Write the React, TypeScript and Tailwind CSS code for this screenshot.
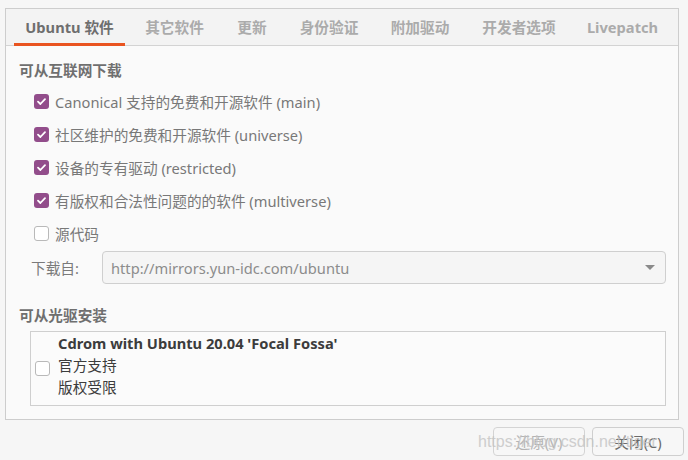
const tabs = [
  { label: "Ubuntu 软件", w: "w-[111px]", active: true },
  { label: "其它软件", w: "w-[85px]" },
  { label: "更新", w: "w-[56px]" },
  { label: "身份验证", w: "w-[84px]" },
  { label: "附加驱动", w: "w-[84px]" },
  { label: "开发者选项", w: "w-[100px]" },
  { label: "Livepatch", w: "w-[93px]" },
];

const sources = [
  { label: "Canonical 支持的免费和开源软件 (main)", checked: true },
  { label: "社区维护的免费和开源软件 (universe)", checked: true },
  { label: "设备的专有驱动 (restricted)", checked: true },
  { label: "有版权和合法性问题的的软件 (multiverse)", checked: true },
  { label: "源代码", checked: false },
];

function Check({ checked }: { checked: boolean }) {
  if (!checked) {
    return <span className="w-[15px] h-[15px] shrink-0 rounded-[3px] border border-[#b9b9b9] bg-white" />;
  }
  return (
    <span className="w-[15px] h-[15px] shrink-0 rounded-[3px] bg-[#924d8b] flex items-center justify-center">
      <svg width="11" height="11" viewBox="0 0 11 11">
        <path d="M2 5.6 L4.4 8 L9 3.2" fill="none" stroke="white" strokeWidth="1.8" strokeLinecap="round" strokeLinejoin="round" />
      </svg>
    </span>
  );
}

export default function App() {
  return (
    <div
      className="relative w-[688px] h-[460px] bg-[#f6f6f6] flex flex-col overflow-hidden text-[14.67px]"
      style={{ fontFamily: '"Noto Sans", "Noto Sans CJK SC", sans-serif' }}
    >
      <div className="mt-[8px] ml-[5px] w-[674px] h-[412px] border border-[#cdcdcd] bg-[#fafafa] flex flex-col">
        {/* tab bar */}
        <div className="h-[37px] bg-[#f3f3f3] border-b border-[#d3d3d3] flex pl-[8px] gap-[7px] shrink-0">
          {tabs.map((t) => (
            <div
              key={t.label}
              className={`${t.w} relative flex items-center justify-center font-bold ${t.active ? "text-[#6e6e6e]" : "text-[#ababab]"}`}
            >
              {t.label}
              {t.active && <span className="absolute left-0 right-0 bottom-[-1px] h-[3px] bg-[#e95420]" />}
            </div>
          ))}
        </div>

        <div className="flex flex-col pl-[13px] pr-[12px]">
          <div className="mt-[14px] h-[20px] leading-[20px] font-bold text-[#6f6f6f]">可从互联网下载</div>

          <div className="mt-[5px] flex flex-col ml-[15px]">
            {sources.map((s) => (
              <div key={s.label} className="h-[33px] flex items-center gap-[6px] text-[#787878]">
                <Check checked={s.checked} />
                <span>{s.label}</span>
              </div>
            ))}
          </div>

          <div className="mt-[1px] flex items-center">
            <span className="w-[83px] pl-[12px] text-[#7a7a7a]">下载自:</span>
            <div className="flex-1 h-[33px] rounded-[4px] border border-[#cfcfcf] bg-[#f5f5f5] flex items-center pl-[8px] pr-[10px] text-[#8c8c8c]">
              <span className="flex-1">http://mirrors.yun-idc.com/ubuntu</span>
              <svg width="10" height="6" viewBox="0 0 10 6">
                <path d="M0 0 H10 L5 5 Z" fill="#8a8a8a" />
              </svg>
            </div>
          </div>

          <div className="mt-[21px] h-[20px] leading-[20px] font-bold text-[#6f6f6f]">可从光驱安装</div>

          <div className="mt-[6px] ml-[11px] h-[75px] border border-[#cfcfcf] bg-[#fbfbfb] flex items-start pl-[4px]">
            <span className="self-center flex">
              <Check checked={false} />
            </span>
            <div className="ml-[8px] flex flex-col leading-[22px] text-[#3c3c3c]">
              <span className="font-bold">Cdrom with Ubuntu 20.04 'Focal Fossa'</span>
              <span>官方支持</span>
              <span>版权受限</span>
            </div>
          </div>
        </div>
      </div>

      <div className="mt-[7px] flex justify-end gap-[7px] pr-[4px]">
        <button className="w-[92px] h-[29px] rounded-[4px] border border-[#d4d4d4] bg-[#f7f7f7] text-[#b4b4b4]">还原(V)</button>
        <button className="w-[92px] h-[29px] rounded-[4px] border border-[#cfcfcf] bg-[#f7f7f7] text-[#6a6a6a]">关闭(C)</button>
      </div>

      <span
        className="absolute left-[478px] top-[430px] text-[16px] text-[#c4c4c4] opacity-80 whitespace-nowrap pointer-events-none"
        style={{ fontFamily: '"Liberation Sans", sans-serif' }}
      >
        https://blog.csdn.net/tiger
      </span>
    </div>
  );
}
